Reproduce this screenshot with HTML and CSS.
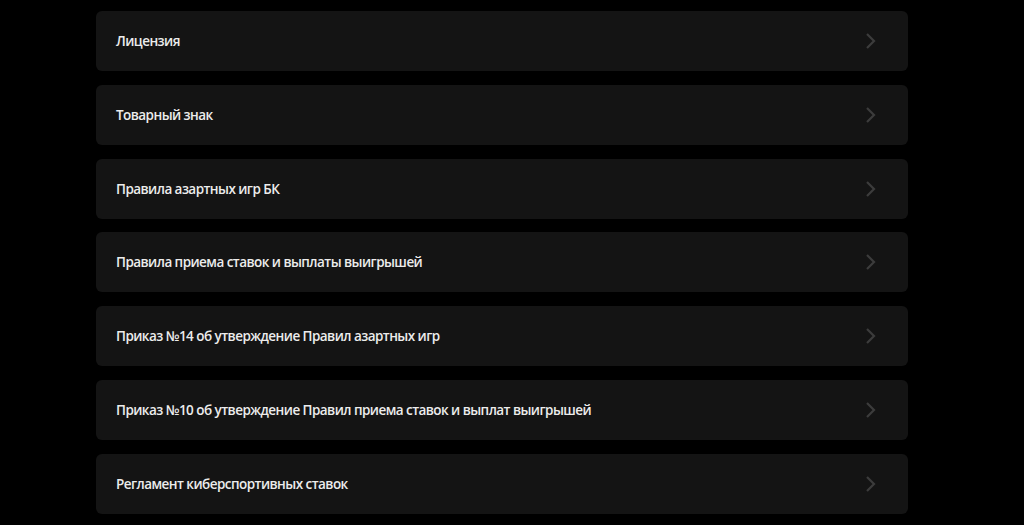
FILE: index.html
```html
<!DOCTYPE html>
<html lang="ru">

  <head>
    <meta charset="UTF-8">
    <meta name="viewport" content="width=device-width, initial-scale=1.0">
    <title>Документы</title>

    <link rel="stylesheet" href="styles.css">

  </head>

  <body>

    <div class="docs__list">

      <a class="docs__item" href="#">
        <span>Лицензия</span>
        <svg class="docs__arrow" viewBox="0 0 12 18"><path d="M2 2l7 7-7 7"/></svg>
      </a>

      <a class="docs__item" href="#">
        <span>Товарный знак</span>
        <svg class="docs__arrow" viewBox="0 0 12 18"><path d="M2 2l7 7-7 7"/></svg>
      </a>

      <a class="docs__item" href="#">
        <span>Правила азартных игр БК</span>
        <svg class="docs__arrow" viewBox="0 0 12 18"><path d="M2 2l7 7-7 7"/></svg>
      </a>

      <a class="docs__item" href="#">
        <span>Правила приема ставок и выплаты выигрышей</span>
        <svg class="docs__arrow" viewBox="0 0 12 18"><path d="M2 2l7 7-7 7"/></svg>
      </a>

      <a class="docs__item" href="#">
        <span>Приказ №14 об утверждение Правил азартных игр</span>
        <svg class="docs__arrow" viewBox="0 0 12 18"><path d="M2 2l7 7-7 7"/></svg>
      </a>

      <a class="docs__item" href="#">
        <span>Приказ №10 об утверждение Правил приема ставок и выплат выигрышей</span>
        <svg class="docs__arrow" viewBox="0 0 12 18"><path d="M2 2l7 7-7 7"/></svg>
      </a>

      <a class="docs__item" href="#">
        <span>Регламент киберспортивных ставок</span>
        <svg class="docs__arrow" viewBox="0 0 12 18"><path d="M2 2l7 7-7 7"/></svg>
      </a>

    </div>

  </body>

</html>
```

FILE: styles.css
```css
* {
  margin: 0;
  padding: 0;
  box-sizing: border-box;
}

body {
  background-color: #000000;
  font-family: "Open Sans", "Noto Sans", sans-serif;
  height: 100vh;
  overflow: hidden;
}

.docs__list {
  display: flex;
  flex-direction: column;
  gap: 13.8px;
  width: 812px;
  margin-left: 96px;
  padding-top: 11px;
}

.docs__item {
  display: flex;
  justify-content: space-between;
  align-items: center;
  height: 60px;
  padding: 0 31px 0 20px;
  background-color: #141414;
  border-radius: 6px;
  color: #ececec;
  font-size: 13.5px;
  font-weight: 600;
  letter-spacing: -0.55px;
  text-decoration: none;
}

.docs__arrow {
  width: 12px;
  height: 18px;
  fill: none;
  stroke: #3c3c3c;
  stroke-width: 2.2;
}
```
